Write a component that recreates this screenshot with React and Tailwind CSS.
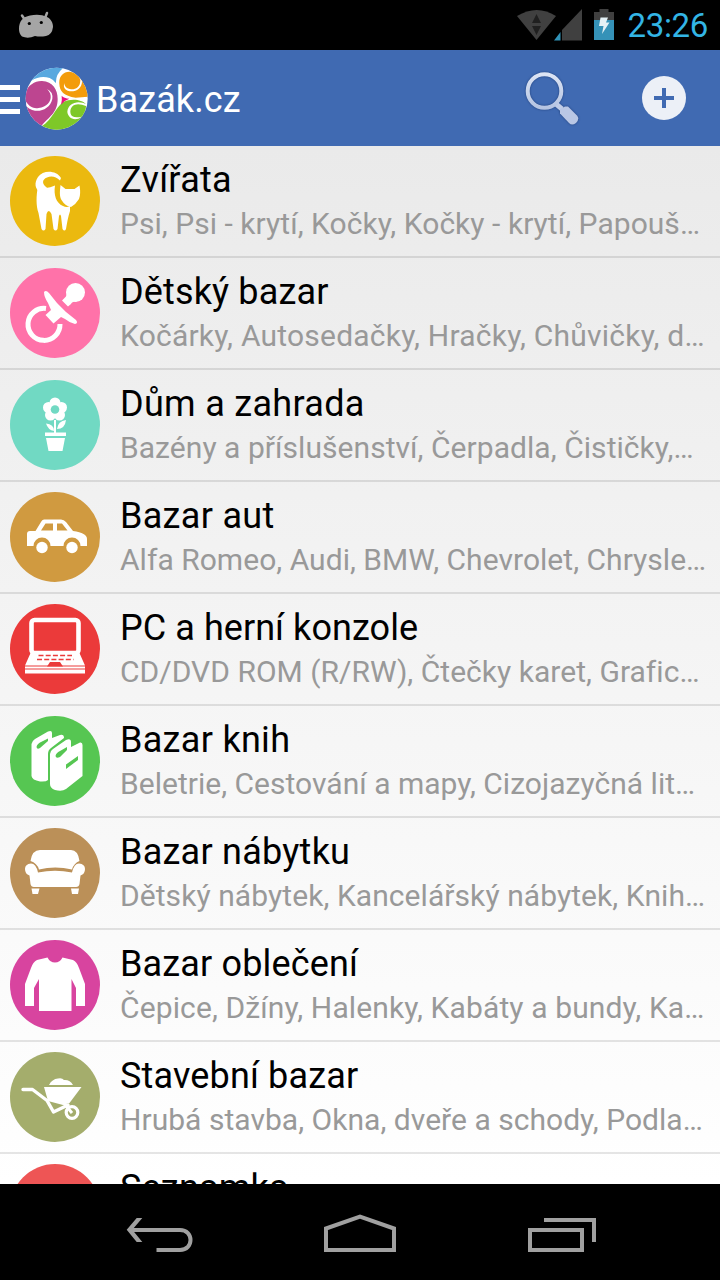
const categories = [
  { title: "Zvířata", text: "Psi, Psi - krytí, Kočky, Kočky - krytí, Papouš…", color: "bg-[#ebb90f]", titleSpacing: "tracking-[0.3px]", textSpacing: "tracking-[0.04px]", Icon: CatIcon },
  { title: "Dětský bazar", text: "Kočárky, Autosedačky, Hračky, Chůvičky, d…", color: "bg-[#ff72a9]", titleSpacing: "tracking-[0.15px]", textSpacing: "tracking-[0.22px]", Icon: PacifierIcon },
  { title: "Dům a zahrada", text: "Bazény a příslušenství, Čerpadla, Čističky,…", color: "bg-[#71d9c3]", titleSpacing: "tracking-[0.3px]", textSpacing: "tracking-[0.05px]", Icon: FlowerIcon },
  { title: "Bazar aut", text: "Alfa Romeo, Audi, BMW, Chevrolet, Chrysle…", color: "bg-[#d09a40]", titleSpacing: "tracking-[0.3px]", textSpacing: "tracking-[0.03px]", Icon: CarIcon },
  { title: "PC a herní konzole", text: "CD/DVD ROM (R/RW), Čtečky karet, Grafic…", color: "bg-[#eb3a3a]", titleSpacing: "tracking-[0.06px]", textSpacing: "tracking-[0.03px]", Icon: LaptopIcon },
  { title: "Bazar knih", text: "Beletrie, Cestování a mapy, Cizojazyčná lit…", color: "bg-[#56c652]", titleSpacing: "tracking-[0.3px]", textSpacing: "tracking-[0.02px]", Icon: BooksIcon },
  { title: "Bazar nábytku", text: "Dětský nábytek, Kancelářský nábytek, Knih…", color: "bg-[#bb9058]", titleSpacing: "tracking-[0.25px]", textSpacing: "tracking-[0.07px]", Icon: SofaIcon },
  { title: "Bazar oblečení", text: "Čepice, Džíny, Halenky, Kabáty a bundy, Ka…", color: "bg-[#d8449f]", titleSpacing: "tracking-[0.15px]", textSpacing: "tracking-[0.12px]", Icon: ShirtIcon },
  { title: "Stavební bazar", text: "Hrubá stavba, Okna, dveře a schody, Podla…", color: "bg-[#a4ad6c]", titleSpacing: "tracking-[0.15px]", textSpacing: "tracking-[0.03px]", Icon: BarrowIcon },
  { title: "Seznamka", text: "", color: "bg-[#ee5555]", titleSpacing: "tracking-[0.2px]", textSpacing: "", Icon: null },
];

function CatIcon() {
  return (
    <svg viewBox="0 0 90 90" fill="#fff">
      <path d="M51 22C46 14 33 14 28 21C24 27 25 33 30 36L37 31.500C31.500 28 32 23.500 37 21.500C42 19.500 46 21 50 24.500Z" />
      <path d="M28 30Q36 34 45 29.500C43.500 39 46 47 53 50C56 51.500 58 51 60 50L60 55C58 61 57 67 56 73Q54.500 76 52.500 73L51 60Q50 57 49 60L47.500 73Q45.500 76 43.500 73L41.500 58Q38.500 52 36.500 58L35.500 73Q33.500 76 31.500 73L28.500 57C26 50 26 40 28 30Z" />
      <path d="M50.500 29L55.500 33H64.500L69.500 29.500Q71 38 69 43Q66 48 61 51Q55 50 51.500 44C49 40 50 34 50.500 29Z" />
    </svg>
  );
}

function PacifierIcon() {
  return (
    <svg viewBox="0 0 90 90" fill="#fff">
      <path d="M36 40.500A16 16 0 1 0 50 56" fill="none" stroke="#fff" strokeWidth="5" />
      <path d="M34 24Q36 21.500 39 25L47 35L56 44L66 52Q68.500 55 65 56Q60 55 55 51L51 49L43.500 55.500L35.500 47L41 42L38 35Q34 29 34 24Z" />
      <circle cx="65.500" cy="24.500" r="9.500" />
      <path d="M56.500 23L67 33.500Q62 33 61 36L58 38.500L52 32.500L54.500 30Q57.500 28 56.500 23Z" />
    </svg>
  );
}

function FlowerIcon() {
  return (
    <svg viewBox="0 0 90 90" fill="#fff">
      <circle cx="45" cy="23" r="5.500" />
      <circle cx="51.500" cy="27.500" r="5.500" />
      <circle cx="49.500" cy="35" r="5.500" />
      <circle cx="40.500" cy="35" r="5.500" />
      <circle cx="38.500" cy="27.500" r="5.500" />
      <circle cx="45" cy="29.500" r="6.500" />
      <circle cx="45" cy="29.500" r="4.300" fill="#71d9c3" />
      <path d="M44 40H46V53H44ZM44 51Q38 50 36 43.500Q44 44 44 51ZM47 49Q48 41 56 40Q55 49 47 49Z" />
      <path d="M35 52.500H56V56H35ZM36 58H55L52.500 71H38.500Z" />
    </svg>
  );
}

function CarIcon() {
  return (
    <svg viewBox="0 0 90 90" fill="#fff">
      <path fillRule="evenodd" d="M34 27.500H51Q54 27.500 56 30L63 39Q77 41 77 47V54H70.500A8.500 8.500 0 0 0 53.500 54H40.500A8.500 8.500 0 0 0 23.500 54H17V42Q17 39 20 39H25.500L31 30Q32 27.500 34 27.500ZM35.500 31.500L31 38.500H43V31.500ZM47 31.500V38.500H57.500L52 31.500Z" />
      <circle cx="32" cy="55.500" r="5.700" />
      <circle cx="62" cy="55.500" r="5.700" />
    </svg>
  );
}

function LaptopIcon() {
  return (
    <svg viewBox="0 0 90 90" fill="#fff">
      <rect x="21.500" y="16" width="47" height="33" rx="3" fill="none" stroke="#fff" strokeWidth="4.600" />
      <path d="M21 48H69L75 61.500H15ZM15 62.500H75V64.500H15ZM15 65.500H75V69.500H15Z" />
      <path d="M40 58H50L53 62.500H37Z" fill="#eb3a3a" />
      <path d="M28.500 51.500H62M27 55.500H63.500" stroke="#eb3a3a" strokeWidth="1.300" strokeDasharray="5 2.200" />
    </svg>
  );
}

function BooksIcon() {
  return (
    <svg viewBox="0 0 90 90" fill="#fff">
      <path d="M21.500 28Q22 25 25 23L38 15.500Q42 14 42 17V22L50 19Q54 18 54 22L41 32Q38 34 38 38V64Q36 66 30 65.500Q22 64 21.500 60Z" />
      <path d="M40 38Q40 35 43 33L56 24Q61 22 61 26V31L70 26.500Q72.500 26 72.500 29V60L56 73Q52 76 45 74Q40 72 40 68Z" />
      <path d="M26.500 31Q27 28 31 26L38 22.500V25L30 32Q27 34 26.500 31ZM45.500 40Q46 37 50 35L57 31V34L50 41Q46 43 45.500 40ZM56 48.500L68 40V44L56 53Z" fill="#56c652" />
    </svg>
  );
}

function SofaIcon() {
  return (
    <svg viewBox="0 0 90 90" fill="#fff">
      <path d="M20.500 33Q22 22 30 22H61Q68 22 69.500 33Q64 35 62 41.500Q45 37.500 29 41.500Q27 35 20.500 33Z" />
      <path d="M21 35.500Q26 35.500 28 44.500Q45 41 62 44.500Q64 35.500 69 35.500Q75 36 75 41Q75 46 70.500 47.500L69.500 56Q69 59 66 59H24Q21 59 20.500 56L19.500 47.500Q15 46 15 41Q15 36 21 35.500Z" />
      <path d="M21.500 60.500H29.500L28 66H22.500ZM61 60.500H69L68 66H62Z" />
    </svg>
  );
}

function ShirtIcon() {
  return (
    <svg viewBox="0 0 90 90" fill="#fff">
      <path d="M37.500 17.500Q40 22.500 45 22.500Q50 22.500 52.500 17.500L63 20Q67 22 69 28L75 44V66H66V48L61.500 39V71H29V39L24 48V66H15V44L21 28Q23 22 27 20Z" />
    </svg>
  );
}

function BarrowIcon() {
  return (
    <svg viewBox="0 0 90 90" fill="#fff">
      <path d="M13 37.500H22.500L37 48.500L43.500 60L58 53" fill="none" stroke="#fff" strokeWidth="3.400" strokeLinecap="round" strokeLinejoin="round" />
      <path d="M34 35H71.500L59.500 51L53 53L38 49ZM39 33Q42 27 48 26.500Q52 25.500 54 28Q60 27.500 63 33Z" />
      <path d="M53 50L62 61" stroke="#fff" strokeWidth="3" />
      <circle cx="62" cy="60.500" r="5.800" fill="none" stroke="#fff" strokeWidth="3.200" />
    </svg>
  );
}

function Logo() {
  return (
    <svg viewBox="14 12 189 189" className="ml-[5px] h-[63px] w-[63px]">
      <clipPath id="ball">
        <circle cx="109" cy="107" r="93" />
      </clipPath>
      <g clipPath="url(#ball)">
        <rect x="10" y="10" width="200" height="200" fill="#fff" />
        <path d="M33 53Q60 36 88 45Q100 50 107 61Q105 35 128 15L100 0L10 30Z" fill="#58a8df" />
        <path d="M10 115C10 75 38 53 65 54C98 56 112 80 112 108C112 150 85 162 62 190C20 190 10 145 10 115Z" fill="#bd4590" />
        <path d="M14 112C28 134 42 138 55 135C79 132 93 116 91 98Q89 84 78 77Q99 85 96 108C90 134 66 146 44 143Q26 140 14 126Z" fill="#fff" />
        <path d="M117 62C115 40 130 25 148 26C180 28 200 60 204 101L166 104C130 98 118 85 117 62Z" fill="#f39c0b" />
        <path d="M155 24Q178 33 180 52C180 73 165 80 153 79C139 78 132 69 132 60Q127 77 142 83C160 89 186 80 185 53L180 30Z" fill="#fff" />
        <path d="M64 190C95 172 104 135 129 117C150 106 185 108 197 124C200 170 150 210 100 204Z" fill="#7ec828" />
        <path d="M199 124C173 110 143 120 141 146C142 163 162 178 184 161Q165 166 155 159C146 149 149 130 164 125Q178 121 199 130Z" fill="#fff" />
        <path d="M124 98Q131 106 147 107Q132 112 122 125Q126 112 124 98Z" fill="#e9137d" />
      </g>
    </svg>
  );
}

function StatusBar() {
  return (
    <header className="flex h-[50px] items-center bg-black pr-3 pl-[18px]">
      <svg viewBox="18 10 36 30" className="h-[30px] w-9" fill="#a5a5a5">
        <path d="M22 15.500L25 20M47 13L45 18" stroke="#a5a5a5" strokeWidth="2.500" strokeLinecap="round" />
        <path d="M19 29C19 21 23 17 30 15.500Q40 13.500 47 17C51 19 53 23 53 27Q52 35 46 36Q40 37 35 36Q28 39 22 36.500Q19 34 19 29Z" />
        <circle cx="29.300" cy="23.500" r="1.600" fill="#000" />
        <circle cx="41.300" cy="22.500" r="1.600" fill="#000" />
      </svg>
      <svg viewBox="516 8 100 34" className="ml-auto h-[34px] w-[100px]">
        <path d="M517 16Q537 4 556 16L536.500 40Z" fill="#404040" />
        <path d="M536.500 14L541 23H532ZM532 26H541L536.500 35Z" fill="#202020" />
        <path d="M582 9V40.500H562V30Z" fill="#404040" />
        <path d="M560.500 32V40.500H554Z" fill="#3093b8" />
        <path d="M594 12H599.500V9H608.500V12H614V20H594Z" fill="#404040" />
        <path d="M594 20H614V40H594Z" fill="#3592b8" />
        <path d="M600.500 17.500H608L606 22.500H609.500L602 34L603.500 26H599Z" fill="#e4f1f6" />
      </svg>
      <span className="ml-[12px] text-[33px] leading-none tracking-[-0.35px] text-[#33b5e5]">23:26</span>
    </header>
  );
}

function ActionBar() {
  return (
    <div className="flex h-24 items-center bg-[#406ab2]">
      <div className="mt-[3px] flex w-5 flex-col gap-[7px]">
        <div className="h-[5px] bg-white" />
        <div className="h-[5px] bg-white" />
        <div className="h-[5px] bg-white" />
      </div>
      <Logo />
      <h1 className="mt-1 ml-2 text-[36px] leading-none tracking-[0.1px] text-white">Bazák.cz</h1>
      <button type="button" className="mr-[60px] ml-auto">
        <svg viewBox="522 68 60 60" className="h-[60px] w-[60px] drop-shadow-[0_0_1px_#1e3f7b]">
          <defs>
            <linearGradient id="glass" x1="0" y1="0" x2="0" y2="1">
              <stop offset="0" stopColor="#dce4f4" />
              <stop offset="1" stopColor="#b5c4e2" />
            </linearGradient>
          </defs>
          <path d="M556 104L562 109" stroke="#c0cde8" strokeWidth="5" />
          <circle cx="544.500" cy="91" r="16.800" fill="none" stroke="url(#glass)" strokeWidth="4" />
          <path d="M560 109L565 106.500H568L577 115.500Q580 119 576 123Q572 126 569 123L560 113.500Z" fill="#b9c7e5" />
        </svg>
      </button>
      <button type="button" className="mr-[34px]">
        <svg viewBox="0 0 44 44" className="h-11 w-11">
          <circle cx="22" cy="22" r="22" fill="#ecf0f7" />
          <path d="M22 12V32M12 22H32" stroke="#406ab2" strokeWidth="4" />
        </svg>
      </button>
    </div>
  );
}

function CategoryRow({ title, text, color, titleSpacing, textSpacing, Icon }) {
  return (
    <li className="flex h-28 shrink-0 border-b-2 border-black/10 pl-[10px]">
      <div className={`mt-[10px] h-[90px] w-[90px] shrink-0 rounded-full ${color}`}>{Icon && <Icon />}</div>
      <div className="ml-5 min-w-0 pt-[13px] whitespace-nowrap">
        <h2 className={`text-[36px] leading-[42px] text-black ${titleSpacing}`}>{title}</h2>
        <p className={`mt-[5px] text-[30px] leading-[35px] text-[#999] ${textSpacing}`}>{text}</p>
      </div>
    </li>
  );
}

function NavigationBar() {
  return (
    <nav className="flex h-24 items-center justify-between bg-black px-[124px]">
      <svg viewBox="0 0 72 48" className="h-12 w-[72px]" fill="none" stroke="#a0a0a0" strokeWidth="4">
        <path d="M6 22H56C70 22 70 42 56 42H32.500" />
        <path d="M12.700 10H18.300L8.300 21.700L18.300 34H12.700L2.700 21.700Z" fill="#a0a0a0" stroke="none" />
      </svg>
      <svg viewBox="0 0 72 48" className="h-12 w-[72px]" fill="none" stroke="#a0a0a0" strokeWidth="4">
        <path d="M2 42V20.500L36 8.500L70 20.500V42Z" />
      </svg>
      <svg viewBox="0 0 72 48" className="h-12 w-[72px]" fill="none" stroke="#a0a0a0" strokeWidth="4">
        <path d="M6 22H58V42H6ZM20 12H70V34" />
      </svg>
    </nav>
  );
}

export default function App() {
  return (
    <div className="flex h-[1280px] w-[720px] flex-col overflow-hidden font-[Roboto,sans-serif]">
      <StatusBar />
      <ActionBar />
      <ul className="flex min-h-0 flex-1 flex-col overflow-hidden bg-linear-to-b from-[#eaeaea] to-white">
        {categories.map((category) => (
          <CategoryRow key={category.title} {...category} />
        ))}
      </ul>
      <NavigationBar />
    </div>
  );
}
